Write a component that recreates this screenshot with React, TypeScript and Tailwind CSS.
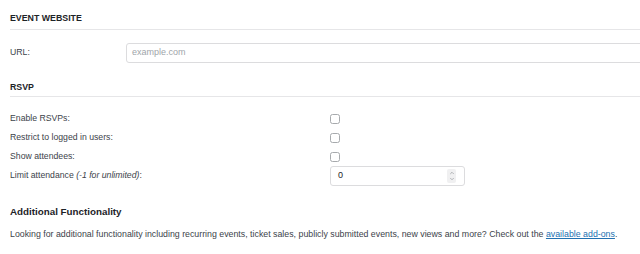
import { ChevronUp, ChevronDown } from 'lucide-react';

function SectionTitle({ children, className = '' }: { children: string; className?: string }) {
  return (
    <h3 className={`border-b border-[#e6e6e8] text-[8.8px] leading-[12px] font-bold text-[#1d2327] ${className}`}>
      {children}
    </h3>
  );
}

function CheckRow({ label }: { label: string }) {
  return (
    <div className="flex h-[19px] items-center">
      <span className="w-[320px] shrink-0 text-[8.7px] text-[#3c434a]">{label}</span>
      <span className="h-[10px] w-[10px] rounded-[2.5px] border border-[#a7aaad] bg-white" />
    </div>
  );
}

export default function App() {
  return (
    <div className="h-[254px] w-full overflow-hidden bg-white font-['Liberation_Sans',Arial,sans-serif]">
      <div className="pl-[10px]">
        <SectionTitle className="pt-[12px] pb-[5px]">EVENT WEBSITE</SectionTitle>

        <div className="mt-[13px] flex items-center">
          <span className="w-[116px] shrink-0 text-[8.7px] text-[#3c434a]">URL:</span>
          <div className="flex h-[20px] w-[560px] shrink-0 items-center rounded-[3px] border border-[#dcdcde] pl-[5px] text-[9px] text-[#a0a5aa]">
            example.com
          </div>
        </div>

        <SectionTitle className="mt-[18px] pb-[3px]">RSVP</SectionTitle>

        <div className="mt-[12px]">
          <CheckRow label="Enable RSVPs:" />
          <CheckRow label="Restrict to logged in users:" />
          <CheckRow label="Show attendees:" />
          <div className="flex h-[20px] items-center">
            <span className="w-[320px] shrink-0 text-[8.7px] text-[#3c434a]">
              Limit attendance <em>(-1 for unlimited)</em>:
            </span>
            <div className="flex h-[20px] w-[135px] items-center justify-between rounded-[3px] border border-[#dcdcde] pl-[7px] pr-[8px]">
              <span className="text-[9px] text-[#1d2327]">0</span>
              <span className="flex h-[14px] w-[9px] flex-col items-center justify-center rounded-[2px] bg-[#f0f0f1] text-[#8c8f94]">
                <ChevronUp size={6} strokeWidth={2.5} />
                <ChevronDown size={6} strokeWidth={2.5} />
              </span>
            </div>
          </div>
        </div>

        <h2 className="mt-[19px] text-[9.8px] leading-[13px] font-bold text-[#1d2327]">Additional Functionality</h2>
        <p className="mt-[11px] whitespace-nowrap text-[8.8px] leading-[11px] text-[#3c434a]">
          Looking for additional functionality including recurring events, ticket sales, publicly submitted events, new
          views and more? Check out the{' '}
          <a href="#" className="text-[#2271b1] underline">
            available add-ons
          </a>
          .
        </p>
      </div>
    </div>
  );
}
